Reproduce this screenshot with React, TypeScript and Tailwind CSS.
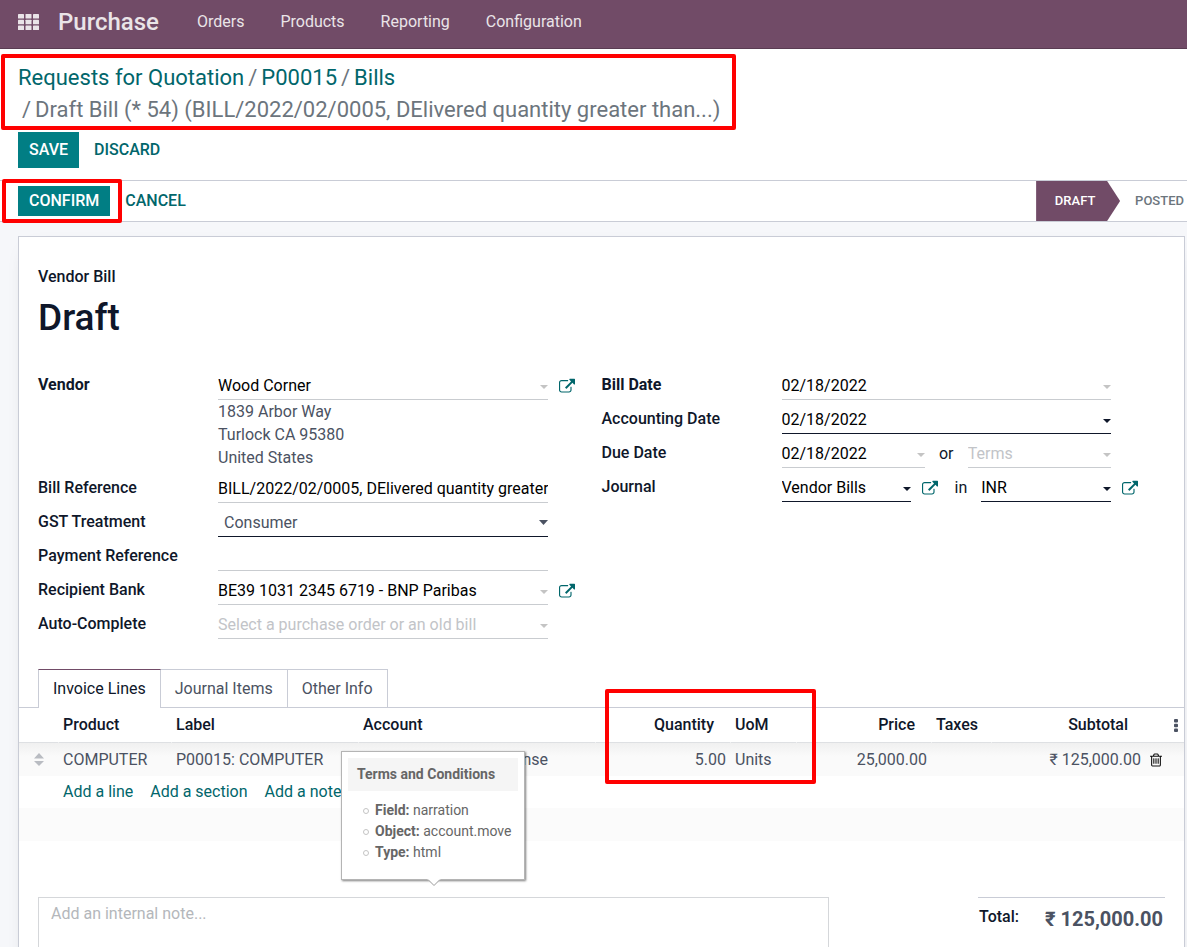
import React from "react";

const EXTERNAL_LINK =
  "M1408 928v320q0 119-84.5 203.5t-203.5 84.5h-832q-119 0-203.5-84.5t-84.5-203.5v-832q0-119 84.5-203.5t203.5-84.5h704q14 0 23 9t9 23v64q0 14-9 23t-23 9h-704q-66 0-113 47t-47 113v832q0 66 47 113t113 47h832q66 0 113-47t47-113v-320q0-14 9-23t23-9h64q14 0 23 9t9 23zm384-864v512q0 26-19 45t-45 19-45-19l-176-176-652 652q-10 10-23 10t-23-10l-114-114q-10-10-10-23t10-23l652-652-176-176q-19-19-19-45t19-45 45-19h512q26 0 45 19t19 45z";
const TRASH =
  "M704 736v576q0 14-9 23t-23 9h-64q-14 0-23-9t-9-23v-576q0-14 9-23t23-9h64q14 0 23 9t9 23zm256 0v576q0 14-9 23t-23 9h-64q-14 0-23-9t-9-23v-576q0-14 9-23t23-9h64q14 0 23 9t9 23zm256 0v576q0 14-9 23t-23 9h-64q-14 0-23-9t-9-23v-576q0-14 9-23t23-9h64q14 0 23 9t9 23zm128 724v-948h-896v948q0 22 7 40.5t14.5 27 10.5 8.5h832q3 0 10.5-8.5t14.5-27 7-40.5zm-672-1076h448l-48-117q-7-9-17-11h-317q-10 2-17 11zm928 32v64q0 14-9 23t-23 9h-96v948q0 83-47 143.5t-113 60.5h-832q-66 0-113-58.5t-47-141.5v-952h-96q-14 0-23-9t-9-23v-64q0-14 9-23t23-9h309l70-167q15-37 54-63t79-26h320q40 0 79 26t54 63l70 167h309q14 0 23 9t9 23z";

function OpenLink({ label }: { label: string }) {
  return (
    <button type="button" aria-label={label} className="shrink-0">
      <svg viewBox="0 0 1792 1600" className="h-4 w-4" fill="#01666b" aria-hidden="true">
        <path d={EXTERNAL_LINK} />
      </svg>
    </button>
  );
}

function Caret({ dark }: { dark?: boolean }) {
  return (
    <svg viewBox="0 0 8 4" className="mt-[2px] h-1 w-2 shrink-0" fill={dark ? "#0f172a" : "#c4c4c4"} aria-hidden="true">
      <path d="M0 0h8L4 4z" />
    </svg>
  );
}

type FieldProps = { id: string; label?: string; value?: string; placeholder?: string; dark?: boolean; caret?: boolean };

function Field({ id, label, value, placeholder, dark, caret = true }: FieldProps) {
  return (
    <div className={`flex h-7 min-w-0 flex-1 items-center border-b ${dark ? "border-[#0f172a]" : "border-[#c9ccd0]"}`}>
      <input
        id={id}
        aria-label={label}
        defaultValue={value}
        placeholder={placeholder}
        className="h-full min-w-0 flex-1 bg-transparent text-black outline-none placeholder:text-[#c2c4c8]"
      />
      {caret && <Caret dark={dark} />}
    </div>
  );
}

type RowProps = { id: string; label: string; strong?: boolean; link?: string; children: React.ReactNode };

function Row({ id, label, strong, link, children }: RowProps) {
  return (
    <div className="grid h-[34px] grid-cols-[180px_1fr_54px] items-end">
      <label htmlFor={id} className={`self-start pt-2 leading-[22px] text-[#0f172a] ${strong ? "font-bold" : "font-medium"}`}>
        {label}
      </label>
      <div className="flex min-w-0 items-center">{children}</div>
      <div className="flex h-7 items-center pl-[11px]">{link && <OpenLink label={link} />}</div>
    </div>
  );
}

const tooltipItems = [
  ["Field:", "narration"],
  ["Object:", "account.move"],
  ["Type:", "html"],
];

const th = "border-r border-b border-r-white border-b-[#dee0e3] font-medium";

export default function App() {
  return (
    <div className="min-h-screen overflow-x-hidden bg-[#f6f7fa] font-[Roboto,sans-serif] text-base text-[#4b5262]">
      <nav className="flex h-[49px] items-center border-b border-[#5a3c52] bg-[#714b67] pb-[5px] pl-[18px] text-[#eae4e8]">
        <button type="button" aria-label="Apps">
          <svg viewBox="0 0 21 16" className="h-4 w-[21px]" fill="currentColor" aria-hidden="true">
            {[0, 7.5, 15].map((x) =>
              [0, 5.7, 11.4].map((y) => <rect key={`${x}-${y}`} x={x} y={y} width="6" height="4.6" rx="0.6" />),
            )}
          </svg>
        </button>
        <a href="#purchase" className="mr-[38px] ml-[19px] text-2xl leading-8 font-medium">
          Purchase
        </a>
        <div className="flex gap-9">
          <a href="#orders">Orders</a>
          <a href="#products">Products</a>
          <a href="#reporting">Reporting</a>
          <a href="#configuration">Configuration</a>
        </div>
      </nav>

      <header className="relative border-b border-[#c9ccd6] bg-white px-[18px] pt-[13px] pb-3">
        <div className="text-[22px] leading-8 text-[#6c757d]">
          <div className="flex gap-1 whitespace-nowrap">
            <a href="#rfq" className="text-[#01666b]">Requests for Quotation</a>
            <span>/</span>
            <a href="#p00015" className="text-[#01666b]">P00015</a>
            <span>/</span>
            <a href="#bills" className="text-[#01666b]">Bills</a>
          </div>
          <div className="flex gap-1 pl-1 whitespace-nowrap">
            <span>/</span>
            <span>Draft Bill (* 54) (BILL/2022/02/0005, DElivered quantity greater than...)</span>
          </div>
        </div>
        <div className="mt-[6px] flex font-medium">
          <button type="button" className="h-9 bg-[#017e84] px-[11px] text-white">SAVE</button>
          <button type="button" className="h-9 px-[15px] text-[#01666b]">DISCARD</button>
        </div>
        <div className="pointer-events-none absolute top-[5px] left-px h-[76px] w-[735px] rounded-xs border-4 border-[#ff0000]" />
      </header>

      <div className="relative flex h-[41px] items-center justify-between border-b border-[#c9ccd6] bg-white pl-[18px] font-medium">
        <div className="flex items-center">
          <button type="button" className="h-[30px] bg-[#017e84] px-[11px] text-white">CONFIRM</button>
          <button type="button" className="h-[30px] px-[15px] text-[#01666b]">CANCEL</button>
        </div>
        <div className="flex h-full text-[13px]">
          <button
            type="button"
            className="w-[84px] bg-[#714b67] pr-[6px] text-white [clip-path:polygon(0_0,71px_0,100%_50%,71px_100%,0_100%)]"
          >
            DRAFT
          </button>
          <button type="button" className="pr-[3px] pl-[15px] text-[#6c757d]">POSTED</button>
        </div>
        <div className="pointer-events-none absolute -top-[2px] left-[2px] h-11 w-[120px] rounded-xs border-4 border-[#ff0000]" />
      </div>

      <main className="mt-[14px] mr-[2px] ml-[18px] border border-[#c9ccd6] bg-white shadow-[0_5px_20px_-15px_rgba(0,0,0,0.4)]">
        <div className="px-[19px] pt-[29px]">
          <div className="leading-[22px] font-medium text-[#0f172a]">Vendor Bill</div>
          <h1 className="mt-[7px] text-[37px] leading-[46px] font-medium text-[#0f172a]">Draft</h1>

          <div className="mt-[25px] grid grid-cols-2">
            <div>
              <Row id="vendor" label="Vendor" strong link="Open vendor">
                <Field id="vendor" value="Wood Corner" />
              </Row>
              <address className="pl-[180px] leading-[23px] not-italic">
                1839 Arbor Way
                <br />
                Turlock CA 95380
                <br />
                United States
              </address>
              <Row id="reference" label="Bill Reference">
                <Field id="reference" value="BILL/2022/02/0005, DElivered quantity greater than" caret={false} />
              </Row>
              <Row id="gst" label="GST Treatment">
                <div className="flex h-7 flex-1 items-center border-b border-[#0f172a]">
                  <select id="gst" className="h-full min-w-0 flex-1 appearance-none bg-transparent pl-[6px] outline-none">
                    <option>Consumer</option>
                  </select>
                  <svg viewBox="0 0 9 5" className="h-[5px] w-[9px]" fill="#4b5262" aria-hidden="true">
                    <path d="M0 0h9L4.500 5z" />
                  </svg>
                </div>
              </Row>
              <Row id="payment" label="Payment Reference">
                <Field id="payment" caret={false} />
              </Row>
              <Row id="bank" label="Recipient Bank" link="Open bank account">
                <Field id="bank" value="BE39 1031 2345 6719 - BNP Paribas" />
              </Row>
              <Row id="auto" label="Auto-Complete">
                <Field id="auto" placeholder="Select a purchase order or an old bill" />
              </Row>
            </div>
            <div>
              <Row id="bill-date" label="Bill Date" strong>
                <Field id="bill-date" value="02/18/2022" />
              </Row>
              <Row id="accounting-date" label="Accounting Date">
                <Field id="accounting-date" value="02/18/2022" dark />
              </Row>
              <Row id="due-date" label="Due Date">
                <Field id="due-date" value="02/18/2022" />
                <span className="w-[43px] text-center text-[#0f172a]">or</span>
                <Field id="terms" label="Payment terms" placeholder="Terms" />
              </Row>
              <Row id="journal" label="Journal" link="Open currency">
                <Field id="journal" value="Vendor Bills" dark />
                <span className="flex w-[70px] items-center justify-between pr-[14px] pl-[11px] text-[#0f172a]">
                  <OpenLink label="Open journal" />
                  in
                </span>
                <Field id="currency" label="Currency" value="INR" dark />
              </Row>
            </div>
          </div>
        </div>

        <div role="tablist" className="mt-[30px] flex h-[39px] pl-[19px] shadow-[inset_0_-1px_0_#c9ccd6]">
          <button type="button" role="tab" aria-selected="true" className="border-x border-t border-x-[#c9ccd6] border-t-[#714b67] bg-white px-[14px] text-[#0f172a]">
            Invoice Lines
          </button>
          <button type="button" role="tab" aria-selected="false" className="border-t border-r border-b border-[#c9ccd6] px-[14px]">
            Journal Items
          </button>
          <button type="button" role="tab" aria-selected="false" className="border-t border-r border-b border-[#c9ccd6] px-[14px]">
            Other Info
          </button>
        </div>

        <div className="relative">
          <table className="w-full table-fixed border-separate border-spacing-0 text-left">
            <colgroup>
              <col className="w-[40px]" />
              <col className="w-[113px]" />
              <col className="w-[187px]" />
              <col />
              <col className="w-[135px]" />
              <col className="w-[66px]" />
              <col className="w-[135px]" />
              <col className="w-[60px]" />
              <col className="w-[154px]" />
              <col className="w-[38px]" />
            </colgroup>
            <thead className="text-[#0f172a]">
              <tr className="h-[35px]">
                <th className={th} aria-label="Reorder" />
                <th className={`${th} pl-1`}>Product</th>
                <th className={`${th} pl-1`}>Label</th>
                <th className={`${th} pl-1`}>Account</th>
                <th className={`${th} pr-4 text-right`}>Quantity</th>
                <th className={`${th} pl-1`}>UoM</th>
                <th className={`${th} pr-4 text-right`}>Price</th>
                <th className={`${th} pl-1`}>Taxes</th>
                <th className="border-b border-[#dee0e3] pr-[18px] text-right font-medium">Subtotal</th>
                <th className="border-b border-[#dee0e3] pl-7">
                  <button type="button" aria-label="Optional columns" className="block">
                    <svg viewBox="0 0 4 13" className="h-[13px] w-1" fill="#4b5262" aria-hidden="true">
                      <rect width="4" height="3.400" rx="1" />
                      <rect y="4.800" width="4" height="3.400" rx="1" />
                      <rect y="9.600" width="4" height="3.400" rx="1" />
                    </svg>
                  </button>
                </th>
              </tr>
            </thead>
            <tbody>
              <tr className="h-[33px] bg-linear-to-b from-[#f0f0f0] to-[#fafafa] to-40%">
                <td className="pl-[15px]">
                  <svg viewBox="0 0 10 13" className="h-[13px] w-[10px]" fill="#b9bcc2" aria-hidden="true">
                    <path d="M5 0l5 5.500H0zM5 13l5-5H0z" />
                  </svg>
                </td>
                <td className="pl-1">COMPUTER</td>
                <td className="pl-1">P00015: COMPUTER</td>
                <td className="pr-12 text-right">Expense</td>
                <td className="pr-[5px] text-right">5.00</td>
                <td className="pl-1">Units</td>
                <td className="pr-[5px] text-right">25,000.00</td>
                <td />
                <td className="pr-[5px] text-right">₹ 125,000.00</td>
                <td className="pl-1">
                  <button type="button" aria-label="Delete row" className="block">
                    <svg viewBox="192 128 1408 1536" className="h-[14px] w-3" fill="#111" aria-hidden="true">
                      <path d={TRASH} />
                    </svg>
                  </button>
                </td>
              </tr>
              <tr className="h-8">
                <td />
                <td colSpan={9} className="pl-1 text-[#01666b]">
                  <div className="flex gap-[17px]">
                    <a href="#line">Add a line</a>
                    <a href="#section">Add a section</a>
                    <a href="#note">Add a note</a>
                  </div>
                </td>
              </tr>
              <tr className="h-[33px] bg-[#fbfbfb]">
                <td colSpan={10} />
              </tr>
            </tbody>
          </table>

          <div
            role="tooltip"
            className="absolute top-[43px] left-[322px] w-[184px] border border-[#b4b4b4] bg-white p-[6px] text-sm text-[#666] shadow-[1px_1px_2px_rgba(0,0,0,0.5)]"
          >
            <div className="bg-[#f5f5f5] px-[9px] leading-[33px] font-bold">Terms and Conditions</div>
            <ul className="mt-[9px] mb-[10px] pl-[15px] leading-[21px]">
              {tooltipItems.map(([name, value]) => (
                <li key={name} className="flex items-center gap-[6px] whitespace-nowrap">
                  <span className="h-[6px] w-[6px] rounded-full border border-[#c4c4c4]" />
                  <span>
                    <b>{name}</b> {value}
                  </span>
                </li>
              ))}
            </ul>
            <svg viewBox="0 0 14 7" className="absolute top-full left-[85px] h-[7px] w-[14px]" aria-hidden="true">
              <path d="M0 0h14L7 6.500z" fill="white" />
              <path d="M1 .5l6 6 6-6" fill="none" stroke="#999" />
            </svg>
          </div>
          <div className="pointer-events-none absolute -top-[19px] left-[586px] h-[95px] w-[211px] rounded-xs border-4 border-[#ff0000]" />
        </div>

        <div className="mt-14 flex items-start justify-between pr-[19px] pl-[19px]">
          <textarea
            aria-label="Internal note"
            placeholder="Add an internal note..."
            className="block h-[120px] w-[791px] resize-none border border-[#d5d7da] px-3 py-[5px] leading-[22px] outline-none placeholder:text-[#b4b7bb]"
          />
          <div className="flex w-[187px] justify-between border-t border-[#c9ccd6] pr-[2px] pl-px">
            <span className="pt-2 leading-[22px] font-medium text-[#0f172a]">Total:</span>
            <span className="pt-2 text-xl leading-[26px] font-bold">₹ 125,000.00</span>
          </div>
        </div>
      </main>
    </div>
  );
}
